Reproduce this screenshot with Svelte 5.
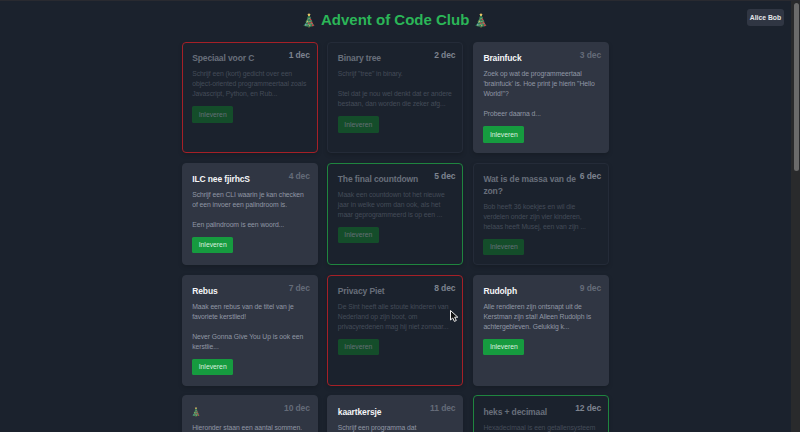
<script>
  const cards = [
    { day: 1, title: 'Speciaal voor C', text: 'Schrijf een (kort) gedicht over een\nobject-oriented programmeertaal zoals\nJavascript, Python, en Rub...', state: 'done wrong' },
    { day: 2, title: 'Binary tree', text: 'Schrijf "tree" in binary.\n\nStel dat je nou wel denkt dat er andere\nbestaan, dan worden die zeker afg...', state: 'done' },
    { day: 3, title: 'Brainfuck', text: "Zoek op wat de programmeertaal\n'brainfuck' is. Hoe print je hierin \"Hello\nWorld!\"?\n\nProbeer daarna d...", state: '' },
    { day: 4, title: 'ILC nee fjirhcS', text: 'Schrijf een CLI waarin je kan checken\nof een invoer een palindroom is.\n\nEen palindroom is een woord...', state: '' },
    { day: 5, title: 'The final countdown', text: 'Maak een countdown tot het nieuwe\njaar in welke vorm dan ook, als het\nmaar geprogrammeerd is op een ...', state: 'done right' },
    { day: 6, title: 'Wat is de massa van de\nzon?', text: 'Bob heeft 36 koekjes en wil die\nverdelen onder zijn vier kinderen,\nhelaas heeft Musej, een van zijn ...', state: 'done' },
    { day: 7, title: 'Rebus', text: 'Maak een rebus van de titel van je\nfavoriete kerstlied!\n\nNever Gonna Give You Up is ook een\nkerstlie...', state: '' },
    { day: 8, title: 'Privacy Piet', text: 'De Sint heeft alle stoute kinderen van\nNederland op zijn boot, om\nprivacyredenen mag hij niet zomaar...', state: 'done wrong' },
    { day: 9, title: 'Rudolph', text: 'Alle rendieren zijn ontsnapt uit de\nKerstman zijn stal! Alleen Rudolph is\nachtergebleven. Gelukkig k...', state: '' },
    { day: 10, title: '', text: 'Hieronder staan een aantal sommen.', state: '' },
    { day: 11, title: 'kaartkersje', text: 'Schrijf een programma dat', state: '' },
    { day: 12, title: 'heks + decimaal', text: 'Hexadecimaal is een getallensysteem', state: 'done right' }
  ];
</script>

{#snippet tree()}
  <svg class="tree" viewBox="0 0 12 15" aria-hidden="true">
    <path d="M5 12h2v2.5H5z" fill="#76513a" />
    <path d="M6 1.5 8 5l-.6.3L9.6 9l-.8.3 2.8 3.5Q6 15 .4 12.8L3.2 9.3 2.4 9l2.2-3.7L4 5z" fill="#2f7d55" />
    <path d="M4.4 6.2 7.8 5M3 9.6l5.8-1.8M2 12.6l8-2.4" stroke="#a6b583" stroke-width=".6" />
    <path d="m6 0 .6 1.1 1.2.2-.9.8.2 1.2L6 2.7l-1.1.6.2-1.2-.9-.8 1.2-.2z" fill="#eac567" />
    <circle cx="7.5" cy="6.5" r=".8" fill="#d83b48" />
    <circle cx="4.3" cy="8.3" r=".7" fill="#e5ca69" />
    <circle cx="8.5" cy="9.7" r=".9" fill="#d83b48" />
    <circle cx="5.8" cy="10.3" r=".8" fill="#d83b48" />
    <circle cx="2.8" cy="11.5" r=".7" fill="#71a8cf" />
    <circle cx="9.8" cy="12.3" r="1" fill="#d83b48" />
    <circle cx="6.8" cy="12.7" r=".6" fill="#e5ca69" />
  </svg>
{/snippet}

<div class="page">
  <main>
    <h1>{@render tree()}<span>Advent of Code Club</span>{@render tree()}</h1>
    <div class="grid">
      {#each cards as card}
        <article class={card.state}>
          <span class="date">{card.day} dec</span>
          <div class="body">
            <h2>{#if card.title}{card.title}{:else}{@render tree()}{/if}</h2>
            <p>{card.text}</p>
            {#if card.day < 10}<button>Inleveren</button>{/if}
          </div>
        </article>
      {/each}
    </div>
  </main>
  <div class="user">Alice Bob</div>
  <div class="scrollbar"><div class="thumb"></div></div>
  <svg class="cursor" viewBox="0 0 10 14" aria-hidden="true">
    <path d="M1.5 1.5v9.5l2.2-2L5.4 12.4l1.9-.9-1.6-3.3h3.1z" fill="#111" stroke="#eee" stroke-width="1" />
  </svg>
</div>

<style>
  :global(body) { overflow: hidden; }
  .page {
    position: relative;
    display: flex;
    justify-content: space-between;
    width: 800px;
    height: 432px;
    box-sizing: border-box;
    overflow: hidden;
    background: #1b222d;
    border-top: 1px solid #292a30;
    font-family: "Liberation Sans", Arial, sans-serif;
  }
  main { width: 427px; margin-left: 181.7px; }
  h1 {
    display: flex;
    justify-content: center;
    align-items: center;
    gap: 6px;
    height: 20px;
    margin: 9px 0 12px;
    color: #2bb658;
    font-size: 15px;
    line-height: 20px;
    white-space: nowrap;
  }
  h1 .tree { width: 12px; height: 15px; }
  .tree { display: block; }
  .grid {
    display: grid;
    grid-template-columns: repeat(3, 136px);
    grid-template-rows: 111px 102.5px 111px 111px;
    column-gap: 9.6px;
    row-gap: 9.6px;
  }
  article {
    position: relative;
    box-sizing: border-box;
    padding: 9.3px 9.5px;
    border: 1px solid #303643;
    border-radius: 4px;
    background: #303643;
    box-shadow: 0 2px 4px rgba(0, 0, 0, .16);
  }
  .done { background: #1b222d; border-color: #242b38; }
  .wrong { border-color: #a52027; }
  .right { border-color: #1f853f; }
  .done .body { opacity: .5; }
  .date {
    position: absolute;
    top: 6px;
    right: 6.8px;
    color: #646b78;
    font-size: 8.5px;
    font-weight: 700;
    line-height: 12px;
    letter-spacing: -.1px;
  }
  .done .date { color: #7d838f; }
  h2 {
    min-height: 12px;
    margin: 0;
    color: #f4f5f7;
    font-size: 8.5px;
    line-height: 12px;
    letter-spacing: -.12px;
    white-space: pre;
  }
  .done h2 { color: #b4bac5; }
  h2 .tree { width: 8px; height: 10px; padding-top: 1px; }
  p {
    margin: 5px 0 7px;
    color: #9097a5;
    font-size: 6.8px;
    line-height: 10px;
    letter-spacing: -.06px;
    white-space: pre;
  }
  .done p { color: #6c7482; }
  button {
    display: block;
    width: 41px;
    height: 16.5px;
    padding: 0;
    border: 0;
    border-radius: 1.5px;
    background: #169b3f;
    color: #d9eedf;
    font: 6.8px/16px "Liberation Sans", Arial, sans-serif;
  }
  .done button { color: #a8b9bd; background: #0f7828; }
  .user {
    width: 37px;
    height: 17px;
    margin: 8px 7px 0 auto;
    border-radius: 3px;
    background: #303643;
    color: #e3e5e9;
    font-size: 6.8px;
    font-weight: 700;
    line-height: 17px;
    text-align: center;
    white-space: nowrap;
  }
  .scrollbar { width: 9px; padding-top: 2px; background: #292a2c; }
  .thumb { width: 5px; height: 168px; margin-left: 3px; border-radius: 3px; background: #6b6b6b; }
  .cursor { position: absolute; left: 449px; top: 308px; width: 10px; height: 14px; }
</style>
